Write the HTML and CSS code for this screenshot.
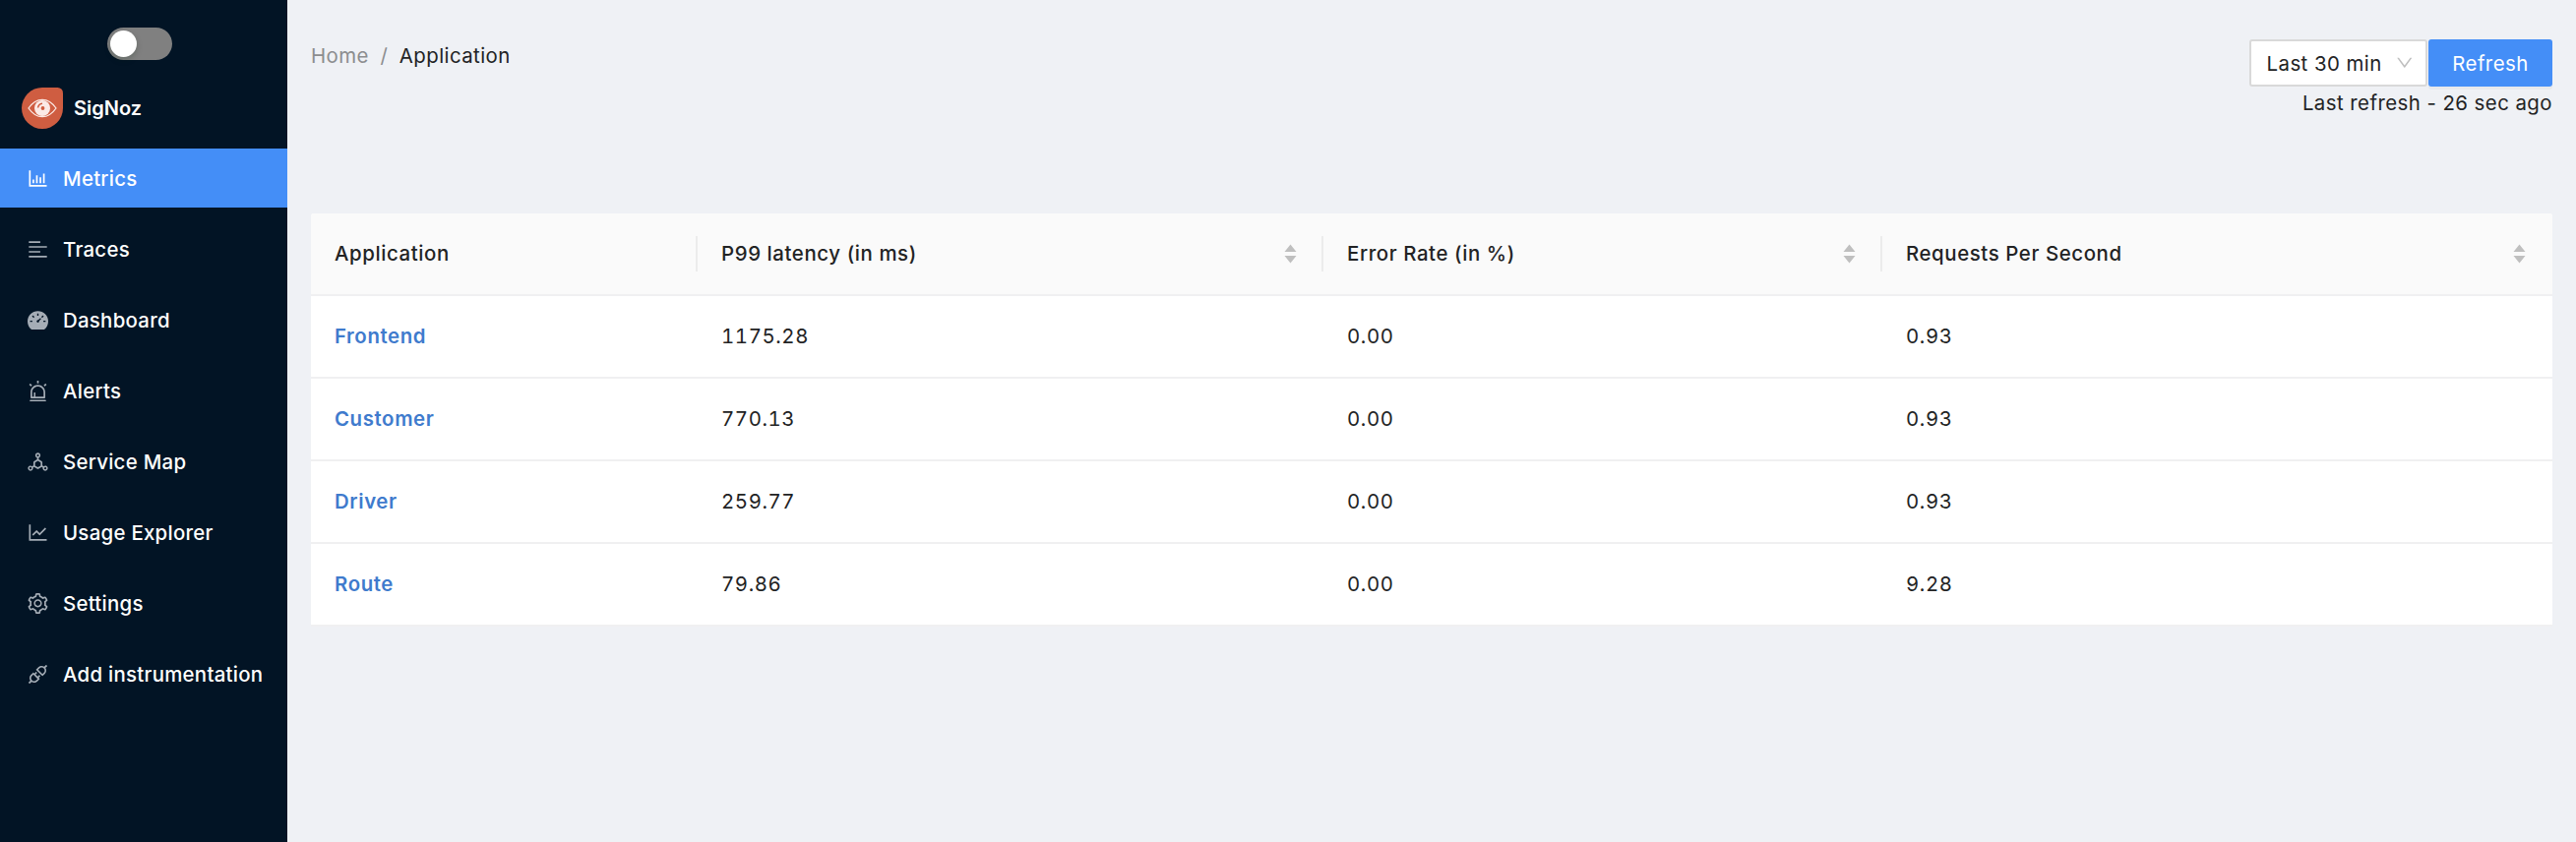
FILE: index.html
```html
<!DOCTYPE html>
<html lang="en">
<head>
<meta charset="utf-8">
<title>SigNoz</title>
<link rel="stylesheet" href="styles.css">
</head>
<body>
<div class="layout">
  <aside class="sider">
    <div class="theme"><button class="switch" aria-label="Toggle theme"><span class="switch-handle"></span></button></div>
    <div class="brand">
      <svg class="logo" viewBox="0 0 42 42">
        <path d="M21 0H36.500A5.500 5.500 0 0 1 42 5.500V21A21 21 0 1 1 21 0Z" fill="#cf5d41"/>
        <path d="M7 21Q13 12.300 21 12.300T35 21Q29 29.700 21 29.700T7 21Z" fill="none" stroke="#fbeae6" stroke-width="1.300"/>
        <circle cx="21" cy="21" r="8" fill="#fbeae6"/>
        <circle cx="21.500" cy="21" r="1.900" fill="#cf5d41"/>
        <path d="M16.600 20.500A5 5 0 0 1 21 16.300" fill="none" stroke="#cf5d41" stroke-width="1.600"/>
      </svg>
      <span class="brand-name">SigNoz</span>
    </div>
    <nav class="menu">
      <a class="item active"><svg class="icon" viewBox="64 64 896 896"><path d="M888 792H200V168c0-4.400-3.600-8-8-8h-56c-4.400 0-8 3.600-8 8v688c0 4.400 3.600 8 8 8h752c4.400 0 8-3.600 8-8v-56c0-4.400-3.600-8-8-8zM280 552h72v160h-72zM432 376h72v336h-72zM584 454h72v258h-72zM736 296h72v416h-72z"/></svg><span>Metrics</span></a>
      <a class="item"><svg class="icon" viewBox="64 64 896 896"><path d="M120 230h496v-72H120zm0 424h496v-72H120zm784 140H120v72h784zm0-424H120v72h784z"/></svg><span>Traces</span></a>
      <a class="item"><svg class="icon" viewBox="64 64 896 896"><path d="M924.800 385.600a446.700 446.700 0 00-96-142.400 446.700 446.700 0 00-142.400-96C631.100 123.800 572.500 112 512 112s-119.100 11.800-174.400 35.200a446.700 446.700 0 00-142.400 96 446.700 446.700 0 00-96 142.400C75.800 440.900 64 499.500 64 560c0 132.700 58.300 257.700 159.900 343.100l1.700 1.400c5.800 4.800 13.100 7.500 20.600 7.500h531.700c7.500 0 14.800-2.700 20.600-7.500l1.700-1.400C901.700 817.700 960 692.700 960 560c0-60.500-11.900-119.100-35.200-174.400zM482 232c0-4.400 3.600-8 8-8h44c4.400 0 8 3.600 8 8v80c0 4.400-3.600 8-8 8h-44c-4.400 0-8-3.600-8-8v-80zM270 582c0 4.400-3.600 8-8 8h-80c-4.400 0-8-3.600-8-8v-44c0-4.400 3.600-8 8-8h80c4.400 0 8 3.600 8 8v44zm90.700-204.500l-31.100 31.100a8.030 8.030 0 01-11.300 0L261.700 352a8.030 8.030 0 010-11.300l31.100-31.100c3.100-3.100 8.200-3.100 11.300 0l56.600 56.600c3.100 3.100 3.100 8.200 0 11.300zm291.100 83.600l-84.500 84.500c5 18.700.2 39.400-14.500 54.100a55.950 55.950 0 01-79.200 0 55.950 55.950 0 010-79.200 55.870 55.870 0 0154.100-14.500l84.500-84.500c3.100-3.100 8.200-3.100 11.300 0l28.300 28.300c3.100 3.100 3.100 8.100 0 11.300zm43-52.400l-31.100-31.100a8.030 8.030 0 010-11.300l56.600-56.600c3.100-3.100 8.200-3.100 11.300 0l31.100 31.100c3.100 3.100 3.100 8.200 0 11.300l-56.600 56.600a8.030 8.030 0 01-11.300 0zM846 582c0 4.400-3.600 8-8 8h-80c-4.400 0-8-3.600-8-8v-44c0-4.400 3.600-8 8-8h80c4.400 0 8 3.600 8 8v44z"/></svg><span>Dashboard</span></a>
      <a class="item"><svg class="icon" viewBox="64 64 896 896"><path d="M193 796c0 17.700 14.300 32 32 32h574c17.700 0 32-14.300 32-32V563c0-176.200-142.800-319-319-319S193 386.800 193 563v233zm72-233c0-136.400 110.600-247 247-247s247 110.600 247 247v193H404V585c0-5.500-4.500-10-10-10h-44c-5.500 0-10 4.500-10 10v171h-75V563zm-48.100-252.500l39.600-39.600c3.100-3.100 3.100-8.200 0-11.300l-67.900-67.900a8.030 8.030 0 00-11.300 0l-39.600 39.600a8.030 8.030 0 000 11.300l67.900 67.900c3.100 3.100 8.100 3.100 11.300 0zm669.600-79.200l-39.600-39.600a8.030 8.030 0 00-11.300 0l-67.900 67.900a8.030 8.030 0 000 11.300l39.600 39.600c3.100 3.100 8.200 3.100 11.300 0l67.900-67.900c3.100-3.200 3.100-8.200 0-11.300zM832 892H192c-17.700 0-32 14.300-32 32v24c0 4.400 3.600 8 8 8h688c4.400 0 8-3.600 8-8v-24c0-17.700-14.300-32-32-32zM484 180h56c4.400 0 8-3.600 8-8V76c0-4.400-3.600-8-8-8h-56c-4.400 0-8 3.600-8 8v96c0 4.400 3.600 8 8 8z"/></svg><span>Alerts</span></a>
      <a class="item"><svg class="icon" viewBox="64 64 896 896"><path d="M888.300 693.200c-42.500-24.600-94.300-18-129.200 12.800l-53-30.700V523.600c0-15.700-8.400-30.300-22-38.100l-136-78.300v-67.100c44.200-15 76-56.800 76-106.100 0-61.900-50.100-112-112-112s-112 50.100-112 112c0 49.300 31.800 91.100 76 106.100v67.100l-136 78.300c-13.600 7.800-22 22.400-22 38.100v151.600l-53 30.700c-34.900-30.800-86.800-37.400-129.200-12.800-53.500 31-71.700 99.400-41 152.900 30.800 53.500 98.900 71.900 152.200 41 42.500-24.600 62.700-73 53.600-118.800l48.700-28.300 140.600 81c6.800 3.900 14.400 5.900 22 5.900s15.200-2 22-5.900L674.500 740l48.700 28.300c-9.100 45.700 11.200 94.200 53.600 118.800 53.300 30.900 121.500 12.600 152.200-41 30.800-53.600 12.600-122-40.700-152.900zm-673 138.400a47.600 47.600 0 01-65.200-17.600c-13.200-22.900-5.400-52.300 17.500-65.500a47.600 47.600 0 0165.200 17.600c13.200 22.900 5.400 52.300-17.500 65.500zM464 234a48.010 48.010 0 0196 0 48.010 48.010 0 01-96 0zm170 446.200l-122 70.300-122-70.300V539.800l122-70.300 122 70.300v140.400zm239.900 133.900c-13.200 22.900-42.400 30.800-65.200 17.600-22.800-13.200-30.700-42.600-17.500-65.500s42.400-30.800 65.200-17.600c22.900 13.200 30.700 42.500 17.500 65.500z"/></svg><span>Service Map</span></a>
      <a class="item"><svg class="icon" viewBox="64 64 896 896"><path d="M888 792H200V168c0-4.400-3.600-8-8-8h-56c-4.400 0-8 3.600-8 8v688c0 4.400 3.600 8 8 8h752c4.400 0 8-3.600 8-8v-56c0-4.400-3.600-8-8-8zM305.800 637.700c3.100 3.100 8.100 3.100 11.300 0l138.300-137.600L583 628.500c3.100 3.100 8.200 3.100 11.300 0l275.400-275.300c3.100-3.100 3.100-8.200 0-11.300l-39.600-39.600c-3.100-3.100-8.200-3.100-11.300 0l-230 229.900L461.400 404c-3.100-3.100-8.200-3.100-11.300 0L266.300 586.700c-3.100 3.100-3.100 8.200 0 11.300l39.500 39.700z"/></svg><span>Usage Explorer</span></a>
      <a class="item"><svg class="icon" viewBox="64 64 896 896"><path d="M924.800 625.700l-65.500-56c3.100-19 4.700-38.400 4.700-57.800s-1.600-38.800-4.700-57.800l65.500-56a32.030 32.030 0 009.300-35.200l-.9-2.600a443.740 443.740 0 00-79.700-137.900l-1.800-2.100a32.120 32.120 0 00-35.100-9.500l-81.300 28.900c-30-24.600-63.500-44-99.700-57.600l-15.700-85a32.050 32.050 0 00-25.800-25.700l-2.700-.5c-52.100-9.400-106.900-9.400-159 0l-2.700.5a32.050 32.050 0 00-25.800 25.700l-15.800 85.400a351.860 351.860 0 00-99 57.400l-81.900-29.100a32 32 0 00-35.100 9.500l-1.800 2.100a446.020 446.020 0 00-79.700 137.900l-.9 2.600c-4.500 12.500-.8 26.500 9.300 35.200l66.300 56.600c-3.100 18.800-4.600 38-4.600 57.100 0 19.200 1.500 38.400 4.600 57.100L99 625.500a32.030 32.030 0 00-9.300 35.200l.9 2.600c18.100 50.400 44.900 96.900 79.700 137.900l1.800 2.100a32.120 32.120 0 0035.100 9.500l81.900-29.100c29.800 24.500 63.100 43.900 99 57.400l15.800 85.400a32.050 32.050 0 0025.800 25.700l2.700.5a449.400 449.400 0 00159 0l2.700-.5a32.050 32.050 0 0025.800-25.700l15.700-85a350 350 0 0099.700-57.600l81.300 28.900a32 32 0 0035.100-9.500l1.800-2.100c34.800-41.100 61.600-87.500 79.700-137.900l.9-2.600c4.500-12.300.8-26.300-9.300-35zM788.300 465.900c2.500 15.100 3.800 30.600 3.800 46.100s-1.300 31-3.800 46.100l-6.600 40.100 74.700 63.900a370.030 370.030 0 01-42.600 73.600L721 702.800l-31.400 25.800c-23.900 19.600-50.500 35-79.300 45.800l-38.100 14.300-17.900 97a377.500 377.500 0 01-85 0l-17.900-97.200-37.800-14.500c-28.500-10.800-55-26.200-78.700-45.700l-31.400-25.900-93.400 33.200c-17-22.900-31.200-47.600-42.600-73.600l75.500-64.500-6.500-40c-2.400-14.900-3.700-30.300-3.700-45.500 0-15.300 1.200-30.600 3.700-45.500l6.500-40-75.500-64.500c11.300-26.100 25.600-50.700 42.600-73.600l93.400 33.200 31.400-25.900c23.700-19.500 50.200-34.900 78.700-45.700l37.900-14.300 17.900-97.200c28.100-3.200 56.800-3.200 85 0l17.900 97 38.100 14.300c28.700 10.800 55.400 26.200 79.300 45.800l31.400 25.800 92.800-32.900c17 22.900 31.200 47.600 42.600 73.600L781.800 426l6.500 39.900zM512 326c-97.200 0-176 78.800-176 176s78.800 176 176 176 176-78.800 176-176-78.800-176-176-176zm79.200 255.200A111.600 111.600 0 01512 614c-29.900 0-58-11.700-79.200-32.800A111.600 111.600 0 01400 502c0-29.900 11.700-58 32.800-79.200C454 401.600 482.100 390 512 390c29.900 0 58 11.600 79.200 32.800A111.600 111.600 0 01624 502c0 29.900-11.700 58-32.800 79.200z"/></svg><span>Settings</span></a>
      <a class="item"><svg class="icon" viewBox="64 64 896 896"><path d="M917.700 148.800l-42.400-42.400c-1.600-1.600-3.600-2.300-5.700-2.300s-4.100.8-5.700 2.300l-76.100 76.100a199.270 199.270 0 00-112.100-34.300c-51.200 0-102.400 19.500-141.500 58.600L432.300 308.700a8.030 8.030 0 000 11.300L704 591.700c1.600 1.600 3.600 2.300 5.700 2.300 2 0 4.100-.8 5.700-2.300l101.900-101.900c68.900-69 77-175.700 24.300-253.500l76.100-76.100c3.100-3.200 3.100-8.300 0-11.400zM769.100 441.700l-59.400 59.400-186.800-186.800 59.400-59.400c24.900-24.900 58.100-38.700 93.400-38.700 35.300 0 68.400 13.700 93.400 38.700 24.900 24.900 38.700 58.100 38.700 93.400 0 35.300-13.800 68.400-38.700 93.400zm-190.200 105a8.030 8.030 0 00-11.300 0L501 613.300 410.700 523l66.700-66.700c3.100-3.100 3.100-8.200 0-11.300L441 408.600a8.030 8.030 0 00-11.300 0L363 475.300l-43-43a7.850 7.850 0 00-5.700-2.300c-2 0-4.100.8-5.700 2.300L206.800 534.200c-68.900 69-77 175.700-24.300 253.500l-76.100 76.100a8.030 8.030 0 000 11.300l42.400 42.400c1.600 1.600 3.600 2.300 5.700 2.300s4.100-.8 5.700-2.300l76.100-76.100c33.700 22.900 72.900 34.300 112.100 34.300 51.200 0 102.400-19.500 141.500-58.600l101.900-101.900c3.100-3.100 3.100-8.200 0-11.300l-43-43 66.700-66.700c3.100-3.100 3.100-8.200 0-11.300l-36.600-36.200zM441.700 769.100a131.320 131.320 0 01-93.400 38.700c-35.300 0-68.400-13.700-93.400-38.700a131.320 131.320 0 01-38.700-93.400c0-35.300 13.700-68.400 38.700-93.400l59.400-59.400 186.800 186.800-59.400 59.400z"/></svg><span>Add instrumentation</span></a>
    </nav>
  </aside>
  <main class="content">
    <header class="topbar">
      <div class="breadcrumb"><span>Home</span><span class="sep">/</span><span class="current">Application</span></div>
      <div class="refresh">
        <div class="controls">
          <div class="select"><span>Last 30 min</span><svg class="chevron" viewBox="64 64 896 896"><path d="M884 256h-75c-5.100 0-9.900 2.500-12.900 6.600L512 654.200 227.900 262.600c-3-4.100-7.800-6.600-12.900-6.600h-75c-6.500 0-10.300 7.400-6.500 12.700l352.600 486.100c12.800 17.600 39 17.600 51.700 0l352.600-486.100c3.900-5.300.1-12.700-6.400-12.700z"/></svg></div>
          <button class="button">Refresh</button>
        </div>
        <div class="last">Last refresh - 26 sec ago</div>
      </div>
    </header>
    <section class="table">
      <div class="row head">
        <div class="cell"><span>Application</span></div>
        <div class="cell"><span>P99 latency (in ms)</span><svg class="sorter" viewBox="0 0 13 20"><path d="M6.500 0.500L12.500 8H0.500ZM6.500 19.500L12.500 12H0.500Z"/></svg></div>
        <div class="cell"><span>Error Rate (in %)</span><svg class="sorter" viewBox="0 0 13 20"><path d="M6.500 0.500L12.500 8H0.500ZM6.500 19.500L12.500 12H0.500Z"/></svg></div>
        <div class="cell"><span>Requests Per Second</span><svg class="sorter" viewBox="0 0 13 20"><path d="M6.500 0.500L12.500 8H0.500ZM6.500 19.500L12.500 12H0.500Z"/></svg></div>
      </div>
      <div class="row"><div class="cell"><a class="link">Frontend</a></div><div class="cell">1175.28</div><div class="cell">0.00</div><div class="cell">0.93</div></div>
      <div class="row"><div class="cell"><a class="link">Customer</a></div><div class="cell">770.13</div><div class="cell">0.00</div><div class="cell">0.93</div></div>
      <div class="row"><div class="cell"><a class="link">Driver</a></div><div class="cell">259.77</div><div class="cell">0.00</div><div class="cell">0.93</div></div>
      <div class="row"><div class="cell"><a class="link">Route</a></div><div class="cell">79.86</div><div class="cell">0.00</div><div class="cell">9.28</div></div>
    </section>
  </main>
</div>
</body>
</html>
```
FILE: styles.css
```css
* { box-sizing: border-box; }
body {
  margin: 0;
  font-family: Inter, "Liberation Sans", sans-serif;
  font-size: 20.4px;
  line-height: 33px;
  letter-spacing: 0.45px;
  color: #222324;
  background: #eff1f5;
}
.layout { display: flex; min-height: 856px; }
.sider { width: 292px; flex: none; background: #021425; color: #fff; }
.theme { display: flex; justify-content: center; padding: 28px 8px 0 0; }
.switch { width: 66px; height: 33px; padding: 3px; border: 0; border-radius: 17px; background: #808080; display: flex; }
.switch-handle { width: 27px; height: 27px; border-radius: 50%; background: #fff; box-shadow: 0 3px 6px rgba(0, 35, 11, 0.2); }
.brand { display: flex; align-items: center; gap: 11px; height: 42px; margin: 28px 0 20px; padding-left: 22px; }
.logo { width: 42px; height: 42px; }
.brand-name { font-weight: 600; font-size: 20px; letter-spacing: 0; }
.menu { display: flex; flex-direction: column; gap: 12px; font-weight: 500; letter-spacing: 0.28px; }
.item { display: flex; align-items: center; gap: 15px; height: 60px; padding-left: 28px; }
.icon { width: 21px; height: 21px; fill: #a5adb6; }
.active { background: #448ef7; }
.active .icon { fill: #fff; }
.content { flex: 1; padding: 40px 24px 0; }
.topbar { display: flex; justify-content: space-between; height: 177px; }
.breadcrumb { display: flex; height: 33px; color: #8c8d8f; }
.sep { margin: 0 11.5px; }
.current { color: #222324; }
.refresh { text-align: right; }
.controls { display: flex; gap: 1px; justify-content: flex-end; }
.select { display: flex; align-items: center; justify-content: space-between; width: 181px; height: 48px; padding: 0 13px 0 15.5px; border: 2px solid #d9d9d9; border-radius: 3px; background: #fff; }
.chevron { width: 17.5px; height: 17.5px; fill: #bfbfbf; }
.button { width: 126px; height: 48px; padding: 0; border: 0; border-radius: 3px; background: #448ef7; color: #fff; font: inherit; letter-spacing: inherit; box-shadow: 0 3px 0 rgba(0, 0, 0, 0.03); }
.table { background: #fff; border-radius: 3px 3px 0 0; overflow: hidden; }
.row { display: grid; grid-template-columns: 393px 636px 568px 1fr; height: 84px; border-bottom: 2px solid #f0f0f1; }
.cell { display: flex; align-items: center; justify-content: space-between; padding: 0 24px 2px; letter-spacing: 0.6px; font-variant-numeric: tabular-nums; }
.head { background: #fafafa; font-weight: 500; }
.head .cell { background: linear-gradient(#ececec, #ececec) right center / 2px 36px no-repeat; font-variant-numeric: normal; }
.head .cell:last-child { background: none; }
.sorter { width: 13px; height: 20px; margin: 2px 3px 0 0; fill: #bfbfbf; }
.link { color: #3f7bcd; font-weight: 600; }
```
